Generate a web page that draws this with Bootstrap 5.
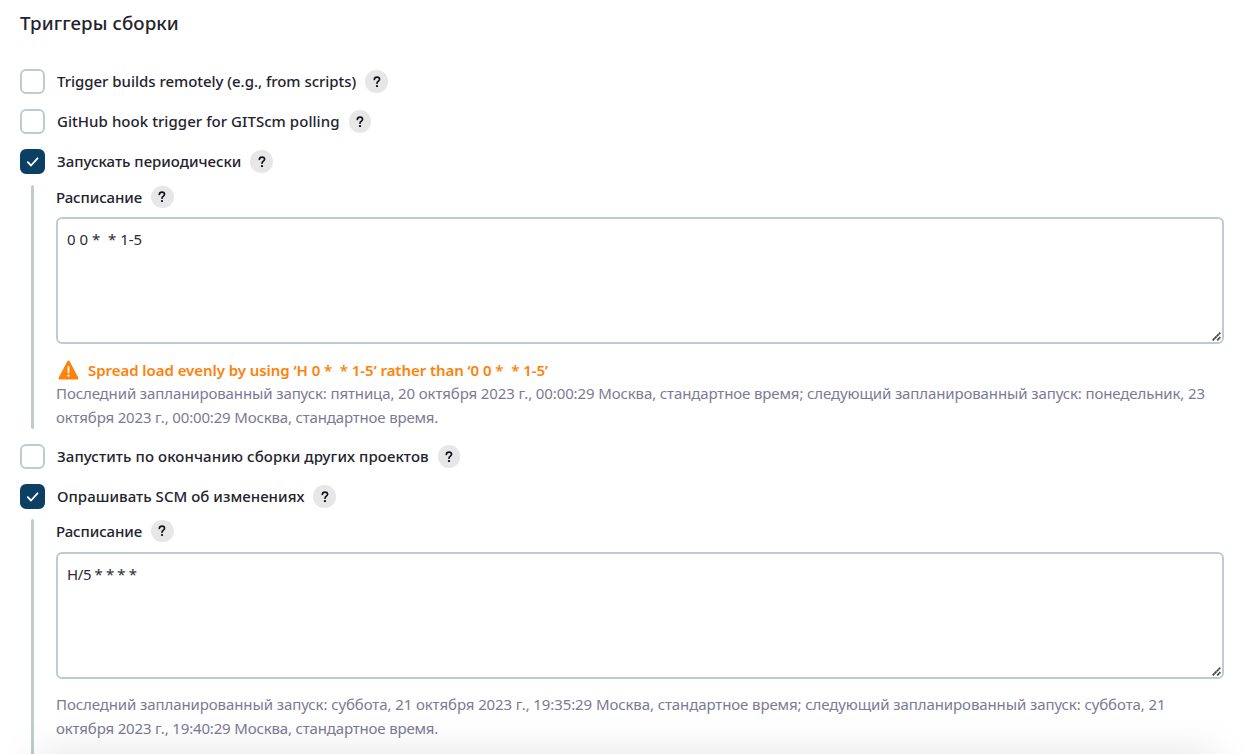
<!DOCTYPE html>
<html lang="ru">
<head>
<meta charset="utf-8">
<meta name="viewport" content="width=device-width, initial-scale=1">
<title>Триггеры сборки</title>
<link href="https://cdn.jsdelivr.net/npm/bootstrap@5.3.0/dist/css/bootstrap.min.css" rel="stylesheet">
<style>
html,body{height:100%;overflow:hidden}
body{font-family:"Noto Sans","Open Sans",sans-serif;font-size:15px;color:#23232e;background:#fff}
.config{padding:11px 28px 0 20px;height:754px;overflow:hidden;position:relative}
.section-title{font-size:18.7px;line-height:24px;font-weight:500;letter-spacing:.1px;margin-bottom:34px}
.option{height:25px;margin-bottom:15px}
.option .form-check-input{width:25px;height:25px;margin:0 12px 0 0;border:2px solid #c0cbcf;border-radius:6px;box-shadow:none}
.option .form-check-input:checked{background-color:#0b4064;border-color:#0b4064;background-size:14px 14px;background-position:center;background-image:url("data:image/svg+xml,%3Csvg xmlns='http://www.w3.org/2000/svg' viewBox='0 0 14 14'%3E%3Cpath d='M1.8 7.2 5 10.5 11.5 3.3' fill='none' stroke='%23fff' stroke-width='1.8' stroke-linecap='round' stroke-linejoin='round'/%3E%3C/svg%3E")}
.option label,.field-label{font-weight:500;line-height:24px;white-space:nowrap}
.option label{padding-bottom:2px}
.help-btn{width:22.5px;height:22.5px;margin-left:9px;background:#e7e7e7;flex:none;border:0;padding:0}
.help-btn svg{width:8px;height:11.5px;display:block}
.nested{margin:-4px 0 16px 11px;padding-left:25px;position:relative}
.nested::before{content:"";position:absolute;left:0;top:0;bottom:0;width:3px;border-radius:2px;background:#c0cbcf}
.field-head{height:24px;margin-bottom:8px}
.field-label{letter-spacing:-.1px}
.schedule{display:block;height:127px;min-height:0;border:2px solid #c0cbcf;border-radius:6px;padding:8px 9px;font-size:15px;line-height:24px;color:#2b2b36;resize:none}
.schedule:focus{border-color:#c0cbcf;box-shadow:none}
.resize-mark{position:absolute;right:3px;bottom:3px;width:9px;height:9px}
.warning{color:#fe820a;font-weight:600;line-height:24px;height:24px;margin-top:14px;letter-spacing:-.05px;white-space:pre}
.warning svg{width:21px;height:20px;margin:0 9px 0 2px}
.run-info{color:#7c7a94;line-height:24px;margin-top:-1px}
.run-info span{display:block;white-space:nowrap;letter-spacing:-.165px}
.run-info .long{letter-spacing:-.12px}
.footer-shade{position:absolute;left:36px;right:36px;top:754px;height:60px;box-shadow:0 0 44px rgba(0,0,0,.11);pointer-events:none}
</style>
</head>
<body>
<svg class="d-none" aria-hidden="true">
<symbol id="help" viewBox="0 0 9 13"><path d="M1.5 3.9C1.6 2 2.8 1.2 4.5 1.2S7.4 2.1 7.4 3.8C7.4 5.8 4.5 5.8 4.5 8.2" fill="none" stroke="#14141f" stroke-width="1.9" stroke-linecap="round"/><circle cx="4.5" cy="11.4" r="1.3" fill="#14141f"/></symbol>
<symbol id="grip" viewBox="0 0 9 9"><path d="M.7 8.3 8.3.7M5.2 8.3 8.3 5.2" stroke="#444" stroke-width="1.8" stroke-dasharray="2.6 .3"/></symbol>
</svg>
<main class="config">
<h1 class="section-title">Триггеры сборки</h1>

<div class="option d-flex align-items-center"><input class="form-check-input" type="checkbox" id="o1"><label for="o1" style="letter-spacing:-.03px">Trigger builds remotely (e.g., from scripts)</label><button class="help-btn rounded-circle d-flex align-items-center justify-content-center" type="button"><svg><use href="#help"/></svg></button></div>
<div class="option d-flex align-items-center"><input class="form-check-input" type="checkbox" id="o2"><label for="o2" style="letter-spacing:.05px">GitHub hook trigger for GITScm polling</label><button class="help-btn rounded-circle d-flex align-items-center justify-content-center" type="button"><svg><use href="#help"/></svg></button></div>
<div class="option d-flex align-items-center"><input class="form-check-input" type="checkbox" id="o3" checked><label for="o3">Запускать периодически</label><button class="help-btn rounded-circle d-flex align-items-center justify-content-center" type="button"><svg><use href="#help"/></svg></button></div>

<section class="nested" style="height:244px;margin-bottom:15px">
<div class="field-head d-flex align-items-center"><span class="field-label">Расписание</span><button class="help-btn rounded-circle d-flex align-items-center justify-content-center" type="button"><svg><use href="#help"/></svg></button></div>
<div class="position-relative"><textarea class="form-control schedule" spellcheck="false">0 0 *  * 1-5</textarea><svg class="resize-mark"><use href="#grip"/></svg></div>
<div class="warning d-flex align-items-center"><svg viewBox="0 0 21 20"><path d="M10.5 1.6 19.4 18.3H1.6Z" fill="#fe820a" stroke="#fe820a" stroke-width="2.2" stroke-linejoin="round"/><path d="M10.5 7v5.4" stroke="#fff" stroke-width="1.9" stroke-linecap="round"/><circle cx="10.5" cy="15.7" r="1.1" fill="#fff"/></svg><span>Spread load evenly by using ‘H 0 *  * 1-5’ rather than ‘0 0 *  * 1-5’</span></div>
<div class="run-info"><span class="long">Последний запланированный запуск: пятница, 20 октября 2023 г., 00:00:29 Москва, стандартное время; следующий запланированный запуск: понедельник, 23</span><span>октября 2023 г., 00:00:29 Москва, стандартное время.</span></div>
</section>

<div class="option d-flex align-items-center"><input class="form-check-input" type="checkbox" id="o4"><label for="o4" style="letter-spacing:.09px">Запустить по окончанию сборки других проектов</label><button class="help-btn rounded-circle d-flex align-items-center justify-content-center" type="button"><svg><use href="#help"/></svg></button></div>
<div class="option d-flex align-items-center"><input class="form-check-input" type="checkbox" id="o5" checked><label for="o5" style="letter-spacing:.04px">Опрашивать SCM об изменениях</label><button class="help-btn rounded-circle d-flex align-items-center justify-content-center" type="button"><svg><use href="#help"/></svg></button></div>

<section class="nested" style="height:260px;margin-top:-5px">
<div class="field-head d-flex align-items-center" style="margin-bottom:9px"><span class="field-label">Расписание</span><button class="help-btn rounded-circle d-flex align-items-center justify-content-center" type="button"><svg><use href="#help"/></svg></button></div>
<div class="position-relative"><textarea class="form-control schedule" spellcheck="false" style="letter-spacing:-.4px">H/5 * * * *</textarea><svg class="resize-mark"><use href="#grip"/></svg></div>
<div class="run-info" style="padding-top:14px"><span class="long" style="letter-spacing:-.1px">Последний запланированный запуск: суббота, 21 октября 2023 г., 19:35:29 Москва, стандартное время; следующий запланированный запуск: суббота, 21</span><span>октября 2023 г., 19:40:29 Москва, стандартное время.</span></div>
</section>
<div class="footer-shade"></div>
</main>
<script src="https://cdn.jsdelivr.net/npm/bootstrap@5.3.0/dist/js/bootstrap.bundle.min.js"></script>
</body>
</html>
